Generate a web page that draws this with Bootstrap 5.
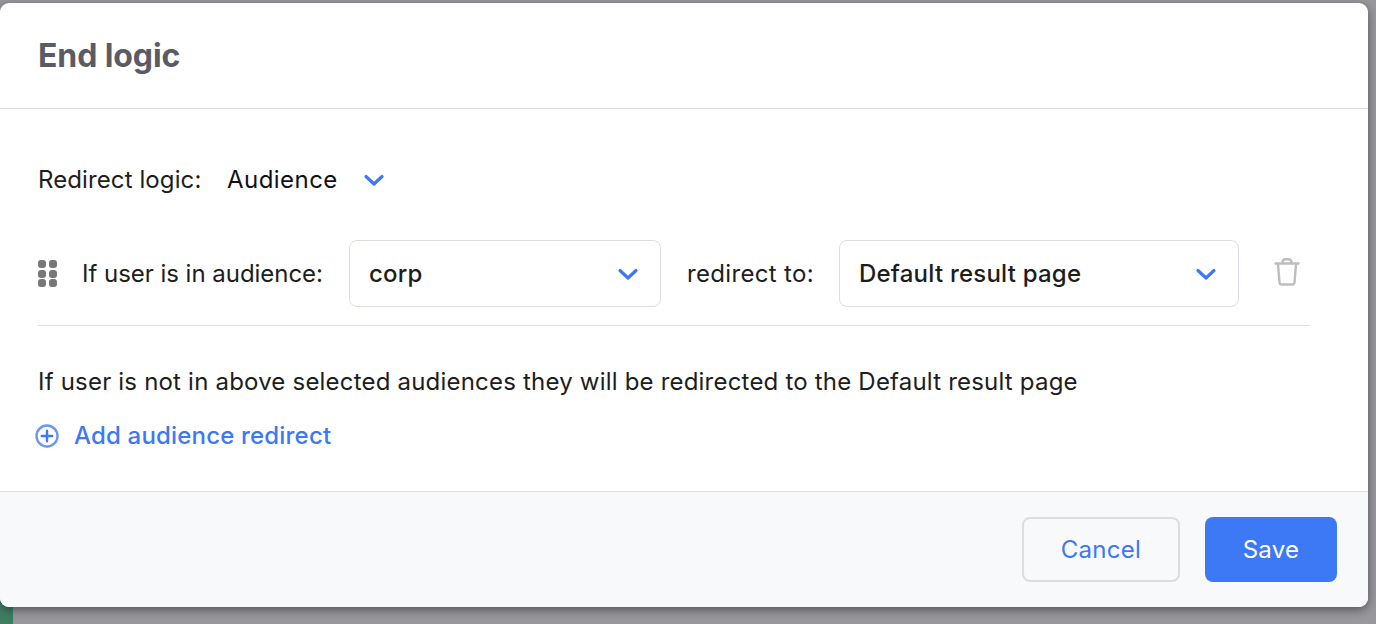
<!DOCTYPE html>
<html lang="en">
<head>
<meta charset="utf-8">
<title>End logic</title>
<link rel="stylesheet" href="https://cdn.jsdelivr.net/npm/bootstrap@5.3.0/dist/css/bootstrap.min.css">
<style>
html,body{height:624px;overflow:hidden}
body{font-family:"Inter","Liberation Sans",sans-serif;color:#1d1d20;background:#98989c linear-gradient(#3f7d63,#3f7d63) no-repeat 0 590px/13px 34px;padding:3px 8px 0 0}
.dlg{height:604px;border-radius:9px;background:#fff;box-shadow:0 3px 10px rgba(30,30,35,.55);overflow:hidden}
.dlg-head{height:106px;padding:2px 38px 0;border-bottom:1px solid #dfdfe3}
.dlg-title{font-size:32px;font-weight:700;color:#5b5b66;margin:0;letter-spacing:-.1px}
.dlg-body{height:382px;padding:0 58px 0 38px;font-size:24px}
.logic-row{height:141px}
.logic-label{width:189px;letter-spacing:.1px}
.logic-val{font-weight:400;letter-spacing:.45px;margin-right:25px;color:#111114}
.aud-row{height:86px;padding-bottom:18px;border-bottom:1px solid #dfdfe6;margin-top:-10px}
.grip{width:19px;height:27px;margin-right:25px;display:grid;grid-template-columns:8px 8px;grid-template-rows:8px 8px 8px;gap:1.500px 3px}
.grip i{background:#777;border-radius:3px}
.aud-label{width:267px;letter-spacing:-.03px}
.sel{height:67px;border:1px solid #dcdce4;border-radius:8px;padding:0 21px 0 19px;font-weight:500;letter-spacing:.22px}
.sel-a{width:312px}
.sel-b{width:400px}
.redir{width:178px;padding-left:26px;letter-spacing:.33px}
.del-ico{margin-right:10px;margin-bottom:3px}
.note{margin-top:38px;line-height:36px;letter-spacing:.2px}
.add{margin-top:18px;margin-left:-3px;gap:15px;color:#3d78f5;font-weight:500;letter-spacing:.18px;line-height:36px;text-decoration:none}
.dlg-foot{height:116px;background:#f8f9fb;border-top:1px solid #dfdfe3;padding:25px 31px 0 0}
.b-act{height:65px;font-size:24px;border-radius:8px;letter-spacing:.3px}
.b-cancel{width:158px;border:2px solid #dcdde0;background:transparent;color:#3d78f5;margin-right:25px}
.b-save{width:132px;border:0;background:#3d78f5;color:#fff}
</style>
</head>
<body>
<div class="dlg">
  <div class="dlg-head d-flex align-items-center"><h1 class="dlg-title">End logic</h1></div>
  <div class="dlg-body">
    <div class="logic-row d-flex align-items-center">
      <span class="logic-label">Redirect logic:</span>
      <span class="logic-val">Audience</span>
      <svg width="22" height="14" viewBox="0 0 22 14" fill="none" stroke="#3d78f5" stroke-width="3.2" stroke-linecap="round" stroke-linejoin="round"><path d="M3 3.500 11 11 19 3.500"/></svg>
    </div>
    <div class="aud-row d-flex align-items-center">
      <span class="grip"><i></i><i></i><i></i><i></i><i></i><i></i></span>
      <span class="aud-label">If user is in audience:</span>
      <div class="sel sel-a d-flex align-items-center justify-content-between"><span>corp</span>
        <svg width="22" height="14" viewBox="0 0 22 14" fill="none" stroke="#3d78f5" stroke-width="3.2" stroke-linecap="round" stroke-linejoin="round"><path d="M3 3.500 11 11 19 3.500"/></svg></div>
      <span class="redir">redirect to:</span>
      <div class="sel sel-b d-flex align-items-center justify-content-between"><span>Default result page</span>
        <svg width="22" height="14" viewBox="0 0 22 14" fill="none" stroke="#3d78f5" stroke-width="3.2" stroke-linecap="round" stroke-linejoin="round"><path d="M3 3.500 11 11 19 3.500"/></svg></div>
      <svg class="ms-auto del-ico" width="26" height="30" viewBox="0 0 26 30" fill="none" stroke="#bdbdbd" stroke-width="2.4" stroke-linecap="round" stroke-linejoin="round"><path d="M1.500 6.500h23M8.500 6c0-2.500 1-3.800 3-3.800h3c2 0 3 1.300 3 3.800M4 7l1.500 18.500c.1 1.200 1 2 2.200 2h10.600c1.200 0 2.100-.8 2.200-2L22 7"/></svg>
    </div>
    <div class="note">If user is not in above selected audiences they will be redirected to the Default result page</div>
    <a class="add d-flex align-items-center" href="#">
      <svg width="24" height="24" viewBox="0 0 24 24" fill="none" stroke="#6b97f3" stroke-width="2.400" stroke-linecap="round"><circle cx="12" cy="12" r="10.500"/><path d="M12 6.800v10.400M6.800 12h10.400" stroke="#3d78f5"/></svg>
      <span>Add audience redirect</span></a>
  </div>
  <div class="dlg-foot d-flex justify-content-end align-items-start">
    <button class="btn b-act b-cancel" type="button">Cancel</button>
    <button class="btn b-act b-save" type="button">Save</button>
  </div>
</div>
</body>
</html>
